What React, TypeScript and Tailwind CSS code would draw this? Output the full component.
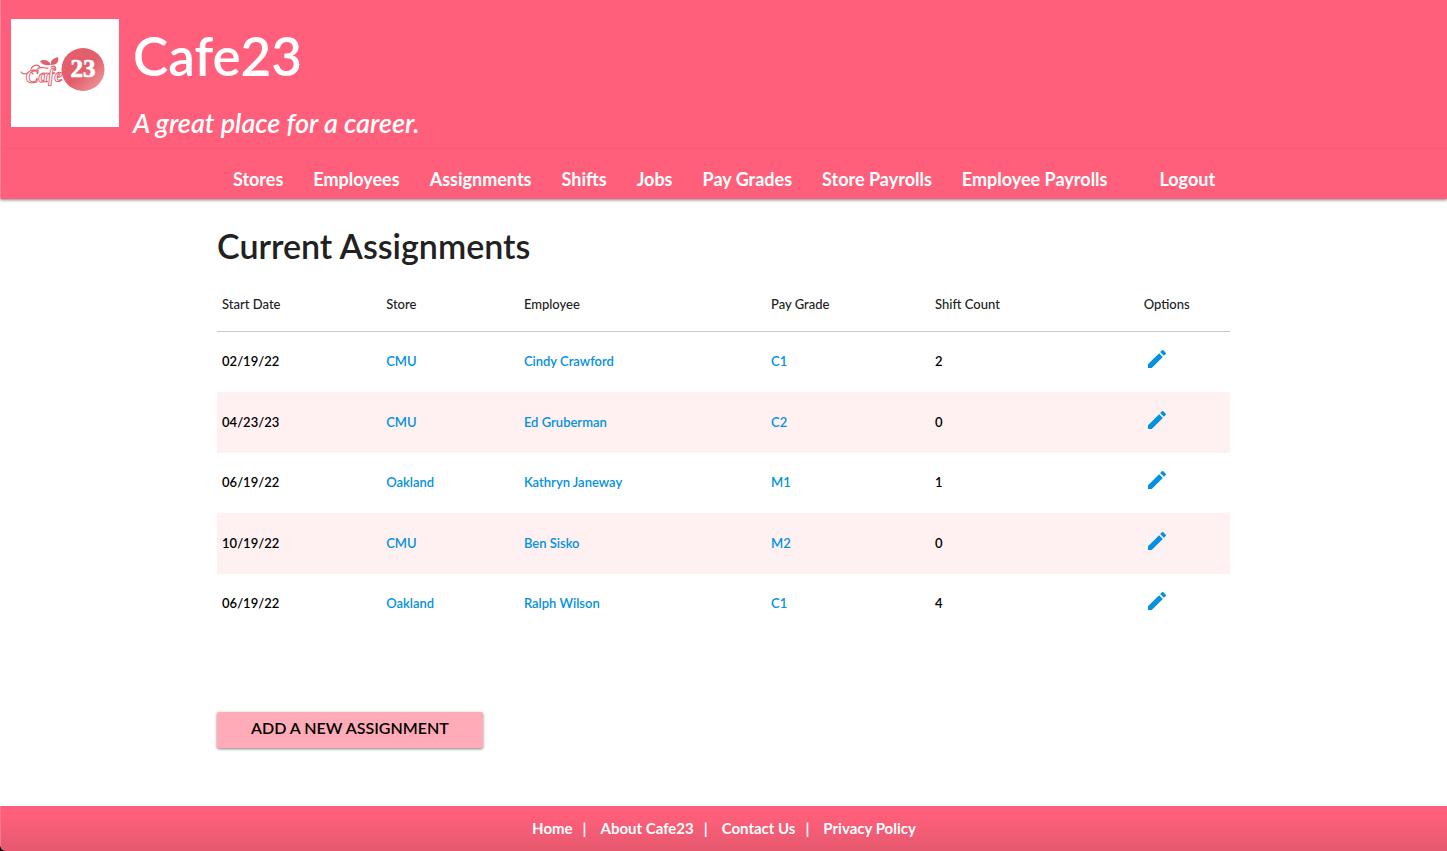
import { MdEdit } from "react-icons/md";

type Assignment = {
  start: string;
  store: string;
  employee: string;
  grade: string;
  shifts: number;
};

const navLinks = [
  "Stores",
  "Employees",
  "Assignments",
  "Shifts",
  "Jobs",
  "Pay Grades",
  "Store Payrolls",
  "Employee Payrolls",
];

const columns = [
  { label: "Start Date", width: "w-[16.2%]" },
  { label: "Store", width: "w-[13.6%]" },
  { label: "Employee", width: "w-[24.4%]" },
  { label: "Pay Grade", width: "w-[16.2%]" },
  { label: "Shift Count", width: "w-[20.6%]" },
  { label: "Options", width: "w-[9%]" },
];

const assignments: Assignment[] = [
  { start: "02/19/22", store: "CMU", employee: "Cindy Crawford", grade: "C1", shifts: 2 },
  { start: "04/23/23", store: "CMU", employee: "Ed Gruberman", grade: "C2", shifts: 0 },
  { start: "06/19/22", store: "Oakland", employee: "Kathryn Janeway", grade: "M1", shifts: 1 },
  { start: "10/19/22", store: "CMU", employee: "Ben Sisko", grade: "M2", shifts: 0 },
  { start: "06/19/22", store: "Oakland", employee: "Ralph Wilson", grade: "C1", shifts: 4 },
];

const footerLinks = ["Home", "About Cafe23", "Contact Us", "Privacy Policy"];

function Logo() {
  return (
    <svg viewBox="0 0 108 108" className="size-[108px] shrink-0 bg-white" role="img" aria-label="Cafe 23">
      <defs>
        <linearGradient id="disc" x1="0" y1="0" x2="1" y2="1">
          <stop offset="0" stopColor="#e6606d" />
          <stop offset="0.5" stopColor="#e25c69" />
          <stop offset="1" stopColor="#f2a0a3" />
        </linearGradient>
      </defs>
      <path
        d="M10 53c2 3 5 2 7 1s4-1 5 1M20 50c1-3 5-5 8-3 1 1 0 3-2 3M28 49c3-2 6 1 9 0M40 48c3-2 6 0 4 3"
        fill="none"
        stroke="#e0606c"
        strokeWidth="1.2"
        strokeLinecap="round"
      />
      <text
        x="0"
        y="0"
        transform="translate(15 64) rotate(-3)"
        fontFamily="Liberation Serif, serif"
        fontStyle="italic"
        fontWeight="700"
        fontSize="19"
        fill="#ffffff"
        stroke="#e0606c"
        strokeWidth="0.9"
      >
        Cafe
      </text>
      <path d="M29 42c4-2 9-1 11 4-5 1-9 0-11-4z" fill="#e0606c" />
      <path d="M40 46c-1-4 1-6 7-8 1 5-1 8-7 8z" fill="#e0606c" />
      <circle cx="72" cy="50.500" r="21.500" fill="url(#disc)" />
      <text
        x="72"
        y="58"
        textAnchor="middle"
        fontFamily="Liberation Serif, serif"
        fontWeight="700"
        fontSize="25"
        fill="#ffffff"
        stroke="#ffffff"
        strokeWidth="0.7"
      >
        23
      </text>
    </svg>
  );
}

export default function App() {
  return (
    <div className="flex min-h-screen flex-col bg-white font-['Lato',sans-serif] text-[#212121]">
      <header className="border-l border-[#ff8398] bg-[#ff5f7a] text-white shadow-[0_1px_3px_rgba(0,0,0,0.5)]">
        <div className="flex h-[149px] gap-[14px] border-b border-[#f65c76] pt-[19px] pl-[10px]">
          <Logo />
          <div>
            <h1 className="text-[53px] leading-[74px] font-semibold">Cafe23</h1>
            <p className="pt-[14px] text-[27px] leading-[32px] font-semibold italic">A great place for a career.</p>
          </div>
        </div>
        <nav className="mx-auto flex w-[70%] text-[18px] leading-[60px] font-bold">
          <ul className="flex h-[50px] flex-1 whitespace-nowrap">
            {navLinks.map((label) => (
              <li key={label}>
                <a href="#" className="block px-[15px]">
                  {label}
                </a>
              </li>
            ))}
            <li className="ml-auto">
              <a href="#" className="block px-[15px]">
                Logout
              </a>
            </li>
          </ul>
        </nav>
      </header>

      <main className="mx-auto w-[70%] flex-1 pt-[25px] pb-[58px]">
        <h2 className="text-[34px] leading-[44px] font-semibold">Current Assignments</h2>
        <table className="mt-[11px] w-full table-fixed border-collapse text-left text-[13px]">
          <thead>
            <tr className="h-[52px] border-b border-[#c8c8c8]">
              {columns.map((column) => (
                <th key={column.label} scope="col" className={`${column.width} px-[5px] font-medium`}>
                  {column.label}
                </th>
              ))}
            </tr>
          </thead>
          <tbody className="font-semibold">
            {assignments.map((row, index) => (
              <tr key={index} className="h-[60px] first:h-[61px] even:h-[61px] even:bg-[#fff1f1]">
                <td className="px-[5px] text-black">{row.start}</td>
                <td className="px-[5px]">
                  <a href="#" className="text-[#0391e0]">{row.store}</a>
                </td>
                <td className="px-[5px]">
                  <a href="#" className="text-[#0391e0]">{row.employee}</a>
                </td>
                <td className="px-[5px]">
                  <a href="#" className="text-[#0391e0]">{row.grade}</a>
                </td>
                <td className="px-[5px] text-black">{row.shifts}</td>
                <td className="px-[6px] pb-[6px]">
                  <a href="#" aria-label={`Edit ${row.employee}`} className="inline-block align-middle text-[#0391e0]">
                    <MdEdit size={24} />
                  </a>
                </td>
              </tr>
            ))}
          </tbody>
        </table>
        <button
          type="button"
          className="mt-[78px] block h-[36px] rounded-[2px] bg-[#ffabb8] px-[34px] pb-[4px] text-[16px] font-semibold text-black uppercase shadow-[0_1px_3px_rgba(0,0,0,0.5)]"
        >
          Add a new assignment
        </button>
      </main>

      <footer className="bg-black">
        <div className="flex h-[45px] items-center justify-center rounded-bl-[6px] border-l border-[#f57a8e] bg-linear-to-b from-[#ff5f7a] from-20% to-[#e5596f] text-[15px] font-bold text-white">
          {footerLinks.map((label, index) => (
            <span key={label} className="flex">
              {index > 0 && <span className="pr-[14px] pl-[10px]">|</span>}
              <a href="#">{label}</a>
            </span>
          ))}
        </div>
      </footer>
    </div>
  );
}
